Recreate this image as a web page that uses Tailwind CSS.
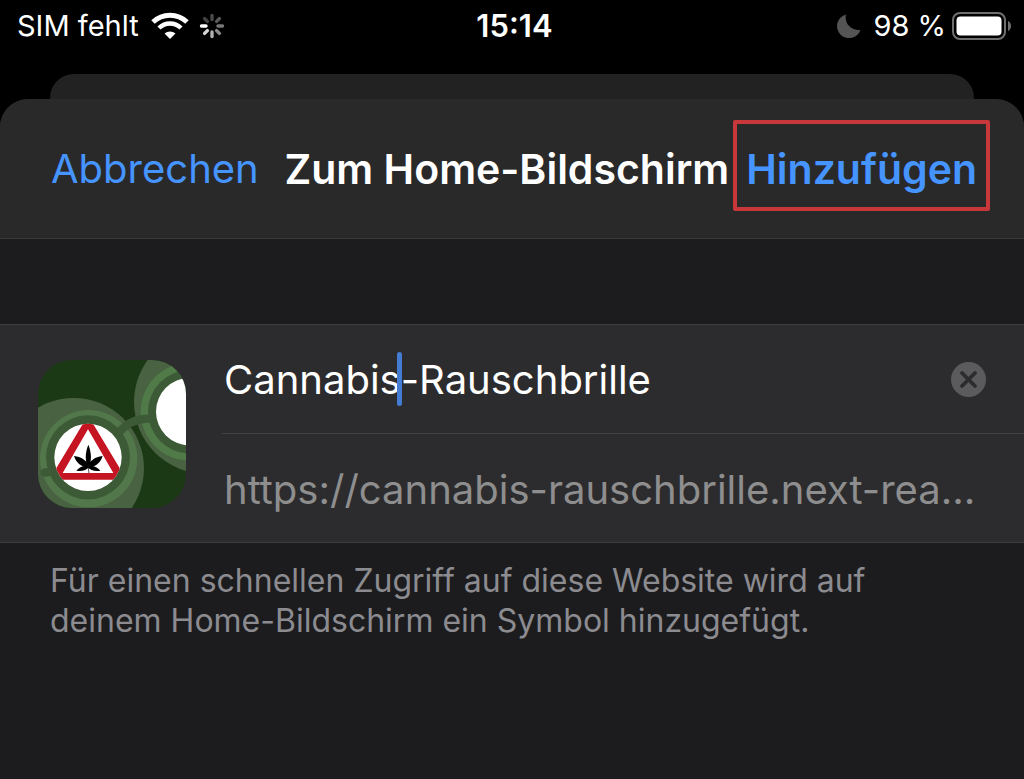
<!DOCTYPE html>
<html lang="de">
<head>
    <meta charset="UTF-8">
    <meta name="viewport" content="width=device-width, initial-scale=1.0">
    <title>Zum Home-Bildschirm</title>
    <script src="https://cdn.jsdelivr.net/npm/@tailwindcss/browser@4"></script>
</head>
<body class="bg-black text-white font-['Inter',sans-serif]">
    <div class="flex min-h-screen flex-col">
        <!-- Status Bar -->
        <div class="grid h-[74px] grid-cols-3 items-start pt-2 pr-3 pl-[17px] text-[29px] leading-9">
            <div class="flex items-center gap-3">
                <span>SIM fehlt</span>
                <svg class="h-7 w-[38px]" viewBox="0 0 38 28" fill="none" aria-hidden="true">
                    <path d="M2 10a24.500 24.500 0 0 1 34 0" stroke="#fff" stroke-width="5"/>
                    <path d="M8 16a15.700 15.700 0 0 1 22 0" stroke="#fff" stroke-width="4.500"/>
                    <path d="M19 27l-5.500-5.500a8.500 8.500 0 0 1 11 0z" fill="#fff"/>
                </svg>
                <svg class="-ml-0.5 h-[26px] w-[26px]" viewBox="0 0 26 26" stroke-width="3.400" stroke-linecap="round" aria-hidden="true">
                    <path d="M13 2.500v4" stroke="#4a4a4a"/>
                    <path d="M20.400 5.600l-2.800 2.800" stroke="#5a5a5a"/>
                    <path d="M23.500 13h-4.500" stroke="#777"/>
                    <path d="M20.400 20.400l-2.800-2.800" stroke="#8c8c8c"/>
                    <path d="M13 23.500v-4.500" stroke="#b0b0b0"/>
                    <path d="M5.600 20.400l2.800-2.800" stroke="#d8d8d8"/>
                    <path d="M2.500 13h4.500" stroke="#fff"/>
                    <path d="M5.600 5.600l2.800 2.800" stroke="#444"/>
                </svg>
            </div>
            <div class="text-center text-[31px] leading-9 font-semibold">15:14</div>
            <div class="flex items-center justify-end gap-1.5">
                <svg class="mr-1.5 h-6 w-6" viewBox="0 0 24 24" aria-hidden="true">
                    <path d="M9 .5a12 12 0 1 0 14.500 15.200A12.500 12.500 0 0 1 9 .5z" fill="#545454"/>
                </svg>
                <span>98 %</span>
                <svg class="h-7 w-[60px]" viewBox="0 0 60 28" aria-hidden="true">
                    <rect x="1" y="1" width="52" height="26" rx="7" fill="none" stroke="#6f6f6f" stroke-width="2"/>
                    <rect x="4.500" y="4.500" width="45" height="19" rx="4" fill="#fff"/>
                    <path d="M56 9c4 1.500 4 8.500 0 10z" fill="#6f6f6f"/>
                </svg>
            </div>
        </div>

        <!-- Page behind the sheet -->
        <div class="mx-[50px] h-[25px] rounded-t-3xl bg-[#222222]"></div>

        <!-- Sheet -->
        <main class="flex-1 rounded-t-[28px] bg-[#1c1c1e]">
            <header class="flex items-center rounded-t-[28px] border-b border-[#3a3a3c] bg-[#29292a] pt-[21px] pr-[34px] pb-[27px] pl-[51px] leading-[50px] whitespace-nowrap">
                <button type="button" class="pt-[6px] text-[40px] text-[#4694ff]">Abbrechen</button>
                <h1 class="ml-auto pt-[6px] text-[41px] font-semibold">Zum Home-Bildschirm</h1>
                <button type="button" class="ml-1 rounded-xs border-4 border-[#c83739] px-[9px] pt-5 pb-[13px] text-[41px] font-semibold text-[#4694ff]">Hinzufügen</button>
            </header>

            <form class="mt-[85px] flex items-center border-y border-[#3e3e40] bg-[#2c2c2e] pl-[38px] text-[40px]">
                <!-- App icon -->
                <svg class="h-[148px] w-[148px] shrink-0 rounded-[34px]" viewBox="0 0 444 444" aria-hidden="true">
                    <defs>
                        <clipPath id="lens"><circle cx="150" cy="292" r="101"/></clipPath>
                    </defs>
                    <rect width="444" height="444" fill="#1b3914"/>
                    <circle cx="503" cy="126" r="215" fill="#486242"/>
                    <circle cx="107" cy="325" r="211" fill="#486242"/>
                    <circle cx="455" cy="155" r="147" fill="#507b48"/>
                    <circle cx="152" cy="296" r="146" fill="#52774a"/>
                    <circle cx="455" cy="155" r="125" fill="#3c5a36"/>
                    <circle cx="150" cy="292" r="126" fill="#3c5a36"/>
                    <path d="M245 216Q278 174 340 176M20 338L40 335" fill="none" stroke="#3c5a36" stroke-width="25" stroke-linecap="round"/>
                    <circle cx="455" cy="155" r="101" fill="#fff"/>
                    <circle cx="150" cy="292" r="101" fill="#fff"/>
                    <path clip-path="url(#lens)" fill="#c51522" fill-rule="evenodd" d="M150 166L266 359H34zM150 208L74 339H226z"/>
                    <!-- Leaf -->
                    <g fill="#000">
                        <path d="M151 254C161 279 161 300 153 322H149C141 300 141 279 151 254z"/>
                        <path d="M108 288C132 291 149 303 153 322C129 321 115 309 108 288z"/>
                        <path d="M194 288C170 291 153 303 149 322C173 321 187 309 194 288z"/>
                        <path d="M115 332C125 319 140 315 153 320C146 331 130 335 115 332z"/>
                        <path d="M187 332C177 319 162 315 149 320C156 331 172 335 187 332z"/>
                        <path d="M150 316h2l2 23h-2z"/>
                    </g>
                </svg>

                <div class="ml-9 min-w-0 flex-1">
                    <div class="relative flex h-[109px] items-center border-b border-[#414143] pr-[38px]">
                        <input type="text" aria-label="Name" value="Cannabis-Rauschbrille" spellcheck="false" class="min-w-0 flex-1 bg-transparent pt-0.5 pl-0.5 outline-none">
                        <span class="absolute top-[27px] left-[175px] h-[54px] w-[5px] rounded-full bg-[#437cd2]"></span>
                        <button type="button" aria-label="Text löschen">
                            <svg class="h-[35px] w-[35px]" viewBox="0 0 35 35" aria-hidden="true">
                                <circle cx="17.500" cy="17.500" r="17.500" fill="#5b5b5d"/>
                                <path d="M11 11l13 13M24 11l-13 13" stroke="#2c2c2e" stroke-width="3.800" stroke-linecap="round"/>
                            </svg>
                        </button>
                    </div>
                    <div class="flex h-[108px] items-center pt-1 pl-0.5 whitespace-nowrap text-[#8e8e8f]">https://cannabis-rauschbrille.next-rea…</div>
                </div>
            </form>

            <p class="max-w-[924px] px-[50px] pt-[18px] text-[32px] leading-10 text-[#8b8b90]">Für einen schnellen Zugriff auf diese Website wird auf deinem Home-Bildschirm ein Symbol hinzugefügt.</p>
        </main>
    </div>
</body>
</html>
